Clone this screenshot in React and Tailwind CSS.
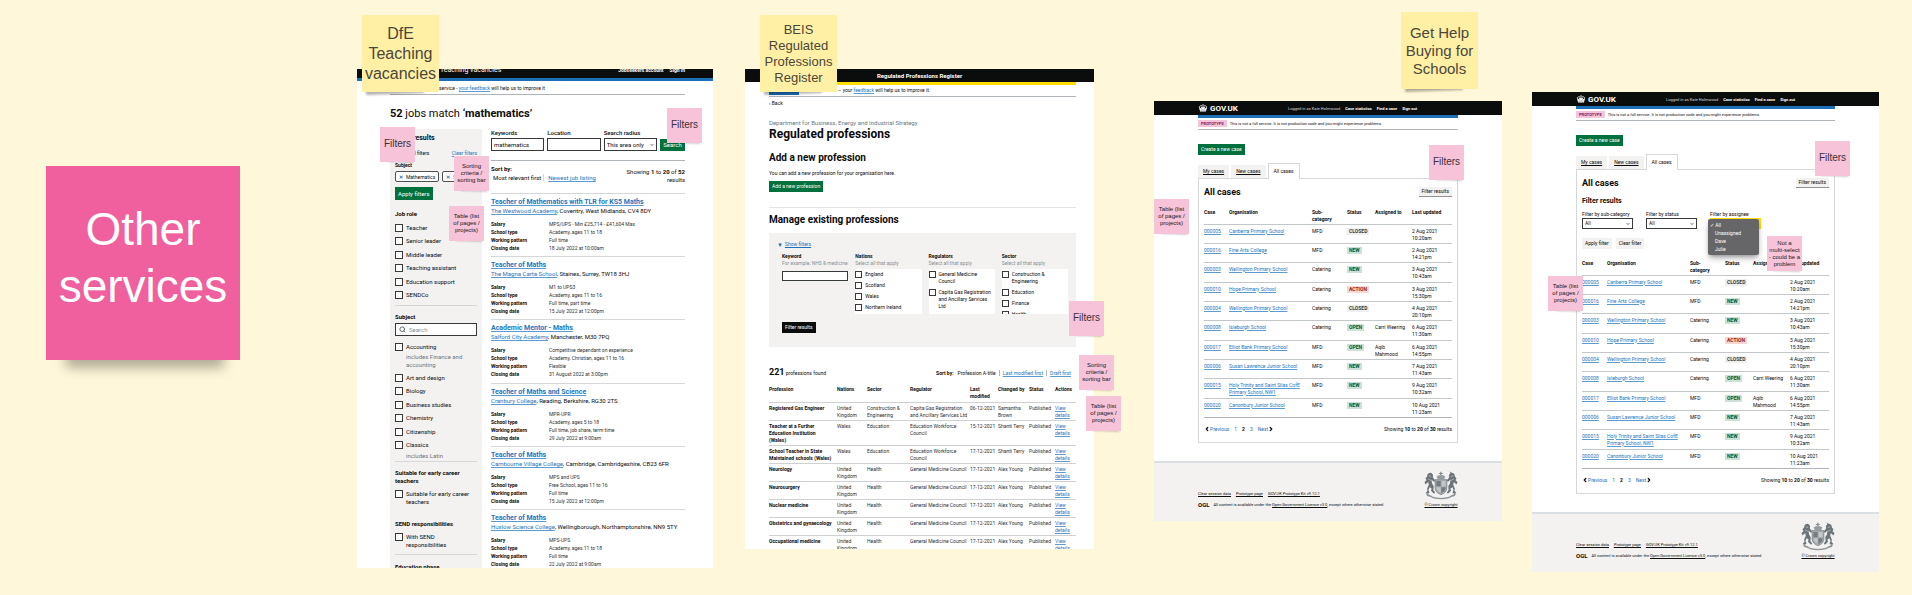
import React from "react";
import { Search, ChevronDown, ChevronLeft, ChevronRight } from "lucide-react";

const LINK = "text-[#2475bd] underline decoration-[#5b9bd0] underline-offset-1";

/* ---------- sticky notes ---------- */

function Sticky({ className, children, shadow = "left" }) {
  return (
    <div className={`absolute z-20 ${className}`}>
      <div
        className={
          shadow === "right"
            ? "absolute right-0.5 bottom-0 h-1.5 w-3/4 rotate-2 bg-black/30 blur-[1px]"
            : "absolute -bottom-0.5 left-1 h-2 w-3/4 -rotate-2 bg-black/30 blur-[1px]"
        }
      />
      <div className="relative flex h-full w-full items-center justify-center bg-inherit text-center">
        {children}
      </div>
    </div>
  );
}

function TitleNote({ className, lines }) {
  return (
    <Sticky className={`h-[77px] w-[77px] bg-[#fff0a6] text-[#4b473b] ${className}`}>
      <h2>
        {lines.map((l) => (
          <span key={l} className="block whitespace-nowrap">
            {l}
          </span>
        ))}
      </h2>
    </Sticky>
  );
}

function FilterNote({ className }) {
  return (
    <Sticky shadow="right" className={`h-[35px] w-[35px] bg-[#f6c3d9] text-[10px] leading-3 text-[#3d3138] ${className}`}>
      <span className="pb-0.5">Filters</span>
    </Sticky>
  );
}

function SmallNote({ className, lines }) {
  return (
    <Sticky shadow="right" className={`h-[35px] w-[35px] bg-[#f6c3d9] text-[6px] leading-[7px] text-[#20181c] ${className}`}>
      <p>
        {lines.map((l) => (
          <span key={l} className="block whitespace-nowrap">
            {l}
          </span>
        ))}
      </p>
    </Sticky>
  );
}

const SORTING = ["Sorting", "criteria /", "sorting bar"];
const TABLE = ["Table (list", "of pages /", "projects)"];

/* ---------- shared controls ---------- */

function TickBlock({ lines, tall }) {
  return (
    <label className="flex items-start gap-[3px]">
      <input
        type="checkbox"
        className={`shrink-0 appearance-none border border-[#383a3a] bg-white ${tall ? "size-2" : "size-[7px]"}`}
      />
      <span>
        {lines.map((l) => (
          <span key={l} className="block whitespace-nowrap">
            {l}
          </span>
        ))}
      </span>
    </label>
  );
}

function TickList({ items }) {
  return (
    <ul>
      {items.map((t) => (
        <li key={t} className="flex h-[13px] items-center even:h-[14px]">
          <TickBlock lines={[t]} tall />
        </li>
      ))}
    </ul>
  );
}

function Select({ label, option, className, focused }) {
  return (
    <label className="block min-w-0 whitespace-nowrap">
      {label}
      <span className={`grid items-center border bg-white font-normal ${focused ? "border-2 border-[#ffdd00]" : "border-[#383a3a]"} ${className}`}>
        <select className="col-start-1 row-start-1 h-full w-full appearance-none px-0.5 outline-none">
          <option>{option}</option>
        </select>
        <ChevronDown className="pointer-events-none col-start-1 row-start-1 mr-0.5 size-1 justify-self-end" strokeWidth={4} />
      </span>
    </label>
  );
}

/* ---------- Teaching vacancies ---------- */

const jobs = [
  ["Teacher of Mathematics with TLR for KS5 Maths", "The Westwood Academy", "Coventry, West Midlands, CV4 8DY", "MPS/UPS - Min £25,714 - £41,604 Max", "Academy, ages 11 to 18", "Full time", "18 July 2022 at 10:00am"],
  ["Teacher of Maths", "The Magna Carta School", "Staines, Surrey, TW18 3HJ", "M1 to UPS3", "Academy, ages 11 to 16", "Full time, part time", "15 July 2022 at 12:00pm"],
  ["Academic Mentor - Maths", "Salford City Academy", "Manchester, M30 7PQ", "Competitive dependant on experience", "Academy, Christian, ages 11 to 16", "Flexible", "31 August 2022 at 3:00pm"],
  ["Teacher of Maths and Science", "Cranbury College", "Reading, Berkshire, RG30 2TS", "MPR-UPR", "Academy, ages 5 to 18", "Full time, job share, term time", "29 July 2022 at 9:00am"],
  ["Teacher of Maths", "Cambourne Village College", "Cambridge, Cambridgeshire, CB23 6FR", "MPS and UPS", "Free School, ages 11 to 16", "Full time", "15 July 2022 at 12:00pm"],
  ["Teacher of Maths", "Huxlow Science College", "Wellingborough, Northamptonshire, NN9 5TY", "MPS-UPS", "Academy, ages 11 to 18", "Full time", "22 July 2022 at 9:00am"],
];

function Job({ job }) {
  const [title, school, place, ...facts] = job;
  const names = ["Salary", "School type", "Working pattern", "Closing date"];
  return (
    <li className="h-[63px] border-t border-[#d5d7d8] pt-1 nth-[3n]:h-16">
      <h4 className="text-[7px] leading-[9px] font-bold">
        <a href="#job" className={LINK}>{title}</a>
      </h4>
      <p className="text-[6px] leading-2 whitespace-nowrap">
        <a href="#school" className={LINK}>{school}</a>, {place}
      </p>
      <dl className="mt-[5px] grid grid-cols-[58px_1fr] text-[5px] leading-2">
        {names.map((n, i) => (
          <React.Fragment key={n}>
            <dt className="font-bold">{n}</dt>
            <dd className="whitespace-nowrap text-[#2f3132]">{facts[i]}</dd>
          </React.Fragment>
        ))}
      </dl>
    </li>
  );
}

function Tag({ children }) {
  return (
    <span className="flex h-[11px] shrink-0 items-center gap-[3px] rounded-xs border border-[#505354] bg-white px-[3px]">
      <span className="font-bold text-[#1d70b8]">✕</span>
      {children}
    </span>
  );
}

function Vacancies() {
  return (
    <section className="absolute top-[69px] left-[357px] h-[499px] w-[356px] overflow-hidden bg-white text-[6px] leading-2 text-[#0b0c0c]">
      <header className="flex h-3 justify-between overflow-hidden border-b-3 border-[#1d70b8] bg-[#0b0c0c] pr-7 pl-[83px] text-white">
        <span className="text-[7px] leading-[3px]">Teaching vacancies</span>
        <span className="flex gap-1.5 text-[5px] leading-[2px] font-bold">
          <a href="#jobseekers">Jobseekers account</a>
          <a href="#signin">Sign in</a>
        </span>
      </header>
      <div className="pr-7 pl-[33px]">
        <p className="h-3.5 border-b border-[#b1b4b6] pt-[3px] pl-[49px] text-[5px] whitespace-nowrap">
          service - <a href="#feedback" className={LINK}>your feedback</a> will help us to improve it
        </p>
        <h3 className="mt-[13px] text-[11px] leading-3">
          <b>52</b> jobs match <b>‘mathematics’</b>
        </h3>
        <div className="mt-[9px] grid grid-cols-[92px_1fr] gap-[9px]">
          <aside className="h-[440px] bg-[#f3f2f1] px-[5px] pt-[5px]">
            <h4 className="text-[7px] leading-2 font-bold">Filter results</h4>
            <div className="mt-[7px] flex justify-between text-[5px]">
              <span className="pl-1">Hide all filters</span>
              <a href="#clear" className={LINK}>Clear filters</a>
            </div>
            <h5 className="mt-1 text-[5px] leading-2 font-bold">Subject</h5>
            <div className="mt-0.5 flex gap-[3px] overflow-hidden text-[5px]">
              <Tag>Mathematics</Tag>
              <Tag>Statistics</Tag>
            </div>
            <button className="mt-[5px] block h-[13px] bg-[#00703c] px-[3px] text-white">Apply filters</button>
            <h5 className="mt-2.5 font-bold">Job role</h5>
            <div className="mt-[3px]">
              <TickList items={["Teacher", "Senior leader", "Middle leader", "Teaching assistant", "Education support", "SENDCo"]} />
            </div>
            <h5 className="mt-[3px] border-t border-[#d5d7d8] pt-[7px] font-bold">Subject</h5>
            <label className="mt-0.5 flex h-[13px] items-center gap-[3px] border border-[#383a3a] bg-white px-[3px]">
              <Search className="size-[7px] text-[#505a5f]" strokeWidth={3} />
              <input aria-label="Search subjects" placeholder="Search" className="w-12 placeholder:text-[#8a8f92]" />
            </label>
            <div className="mt-1">
              <TickList items={["Accounting"]} />
              <p className="pb-0.5 pl-[11px] text-[#6f777b]">includes Finance and<br />accounting</p>
              <TickList items={["Art and design", "Biology", "Business studies", "Chemistry", "Citizenship", "Classics"]} />
              <p className="pb-px pl-[11px] text-[#6f777b]">includes Latin</p>
            </div>
            <h5 className="border-t border-[#d5d7d8] pt-[7px] font-bold whitespace-nowrap">Suitable for early career<br />teachers</h5>
            <div className="mt-[5px]">
              <TickBlock tall lines={["Suitable for early career", "teachers"]} />
            </div>
            <h5 className="mt-3.5 font-bold">SEND responsibilities</h5>
            <div className="mt-[5px]">
              <TickBlock tall lines={["With SEND", "responsibilities"]} />
            </div>
            <h5 className="mt-[5px] border-t border-[#d5d7d8] pt-2 font-bold">Education phase</h5>
          </aside>
          <main>
            <form className="grid grid-cols-[1fr_1fr_1fr_25px] items-end gap-[3px] font-medium">
              <label className="min-w-0">
                Keywords
                <input defaultValue="mathematics" className="mt-px block h-[13px] w-full border border-[#383a3a] px-0.5 font-normal" />
              </label>
              <label className="min-w-0">
                Location
                <input className="mt-px block h-[13px] w-full border border-[#383a3a] px-0.5" />
              </label>
              <Select label="Search radius" option="This area only" className="mt-px h-[13px] w-full" />
              <button type="button" className="h-3 bg-[#00703c] font-normal text-white">Search</button>
            </form>
            <div className="mt-[9px] flex h-[33px] justify-between border-t border-[#b1b4b6] pt-1">
              <div>
                <p className="font-bold">Sort by:</p>
                <p className="mt-px whitespace-nowrap">
                  <span className="border-r border-[#d5d7d8] px-0.5">Most relevant first</span>
                  <a href="#newest" className={`ml-1 ${LINK}`}>Newest job listing</a>
                </p>
              </div>
              <p className="pt-[3px] text-right">
                Showing <b>1</b> to <b>20</b> of <b>52</b>
                <br />
                results
              </p>
            </div>
            <ul>
              {jobs.map((j, i) => (
                <Job key={i} job={j} />
              ))}
            </ul>
          </main>
        </div>
      </div>
    </section>
  );
}

/* ---------- Regulated professions ---------- */

const UK = ["United", "Kingdom"];
const GMC = ["General Medicine Council"];
const professions = [
  [["Registered Gas Engineer"], UK, ["Construction &", "Engineering"], ["Capita Gas Registration", "and Ancillary Services Ltd"], "06-12-2021", ["Samantha", "Brown"]],
  [["Teacher at a Further", "Education Institution", "(Wales)"], ["Wales"], ["Education"], ["Education Workforce", "Council"], "15-12-2021", ["Shanti Terry"]],
  [["School Teacher in State", "Maintained schools (Wales)"], ["Wales"], ["Education"], ["Education Workforce", "Council"], "17-12-2021", ["Shanti Terry"]],
  [["Neurology"], UK, ["Health"], GMC, "17-12-2021", ["Alex Young"]],
  [["Neurosurgery"], UK, ["Health"], GMC, "17-12-2021", ["Alex Young"]],
  [["Nuclear medicine"], UK, ["Health"], GMC, "17-12-2021", ["Alex Young"]],
  [["Obstetrics and gynaecology"], UK, ["Health"], GMC, "17-12-2021", ["Alex Young"]],
  [["Occupational medicine"], UK, ["Health"], GMC, "17-12-2021", ["Alex Young"]],
];

const facets = [
  ["Nations", "gap-1", [["England"], ["Scotland"], ["Wales"], ["Northern Ireland"]]],
  ["Regulators", "gap-1", [["General Medicine", "Council"], ["Capita Gas Registration", "and Ancillary Services", "Ltd"], ["Education Workforce"]]],
  ["Sector", "gap-1", [["Construction &", "Engineering"], ["Education"], ["Finance"], ["Health"]]],
];

function Lines({ of }) {
  return of.map((l) => (
    <span key={l} className="block whitespace-nowrap">
      {l}
    </span>
  ));
}

function Professions() {
  return (
    <section className="absolute top-[69px] left-[745px] h-[480px] w-[349px] overflow-hidden bg-white text-[5px] leading-[7px] text-[#0b0c0c]">
      <header className="h-[13px] bg-[#0b0c0c] text-center text-[6px] leading-[13px] font-bold text-white">Regulated Professions Register</header>
      <div className="pr-[18px] pl-6">
        <div className="flex h-[15px] items-center gap-[22px] border-t-3 border-b border-t-[#ffdd00] border-b-[#b1b4b6]">
          <strong className="h-2 w-[30px] bg-[#1d70b8] px-1 text-white">ALPHA</strong>
          <span className="whitespace-nowrap">
            service – your <a href="#feedback" className={LINK}>feedback</a> will help us to improve it.
          </span>
        </div>
        <a href="#back" className="mt-[3px] block">‹ Back</a>
        <p className="mt-3 text-[6px] leading-2 text-[#6f777b]">Department for Business, Energy and Industrial Strategy</p>
        <h3 className="text-[12px] leading-3.5 font-bold">Regulated professions</h3>
        <h4 className="mt-3 text-[10px] leading-2.5 font-bold">Add a new profession</h4>
        <p className="mt-[7px]">You can add a new profession for your organisation here.</p>
        <button className="mt-1 block h-[11px] bg-[#00703c] px-[3px] text-white">Add a new profession</button>
        <h4 className="mt-[15px] border-t border-[#e3e4e5] pt-[7px] text-[10px] leading-2.5 font-bold">Manage existing professions</h4>
        <div className="mt-2 bg-[#f3f2f1] px-2 pt-2 pb-3.5">
          <a href="#filters" className="flex items-center gap-0.5 text-[#1d70b8]">
            <span className="text-[6px]">▼</span>
            <span className="underline">Show filters</span>
          </a>
          <div className="mt-[5px] grid grid-cols-4 gap-[7px] pl-[5px]">
            <label>
              <b>Keyword</b>
              <span className="block whitespace-nowrap text-[#8a8f92]">For example, NHS &amp; medicine</span>
              <input className="mt-1 block h-2.5 w-full border border-[#383a3a] bg-white" />
            </label>
            {facets.map(([name, gap, items]) => (
              <fieldset key={name} className="min-w-0">
                <legend className="font-bold">{name}</legend>
                <p className="whitespace-nowrap text-[#8a8f92]">Select all that apply</p>
                <div className={`mt-0.5 flex h-[45px] flex-col overflow-hidden bg-white pt-0.5 ${gap}`}>
                  {items.map((it) => (
                    <TickBlock key={it[0]} lines={it} />
                  ))}
                </div>
              </fieldset>
            ))}
          </div>
          <button className="mt-2 ml-[5px] block h-[11px] bg-[#0b0c0c] px-[3px] text-white">Filter results</button>
        </div>
        <div className="mt-[19px] flex items-center justify-between leading-3">
          <p><b className="text-[9px]">221</b> professions found</p>
          <p className="pr-[5px] whitespace-nowrap">
            <b>Sort by:</b>
            <span className="ml-1 border-r border-[#b1b4b6] pr-[3px]">Profession A-title</span>
            <span className="border-r border-[#b1b4b6] px-[3px]"><a href="#last" className={LINK}>Last modified first</a></span>
            <a href="#draft" className={`ml-[3px] ${LINK}`}>Draft first</a>
          </p>
        </div>
        <table className="mt-[7px] w-full table-fixed border-collapse text-left">
          <colgroup>
            <col className="w-[68px]" />
            <col className="w-[30px]" />
            <col className="w-[43px]" />
            <col className="w-[60px]" />
            <col className="w-7" />
            <col className="w-[31px]" />
            <col className="w-[26px]" />
            <col />
          </colgroup>
          <thead>
            <tr className="h-4 align-top">
              {[["Profession"], ["Nations"], ["Sector"], ["Regulator"], ["Last", "modified"], ["Changed by"], ["Status"], ["Actions"]].map((h) => (
                <th key={h[0]} className="font-bold"><Lines of={h} /></th>
              ))}
            </tr>
          </thead>
          <tbody>
            {professions.map(([name, nation, sector, reg, date, by]) => (
              <tr key={name[0]} className="border-t border-[#cfd1d2] align-top text-[#2f3132]">
                <th className="pt-0.5 pb-px font-bold text-[#0b0c0c]"><Lines of={name} /></th>
                <td className="pt-0.5"><Lines of={nation} /></td>
                <td className="pt-0.5"><Lines of={sector} /></td>
                <td className="pt-0.5"><Lines of={reg} /></td>
                <td className="pt-0.5 whitespace-nowrap">{date}</td>
                <td className="pt-0.5"><Lines of={by} /></td>
                <td className="pt-0.5">Published</td>
                <td className="pt-0.5 pb-px"><a href="#details" className={LINK}>View<br />details</a></td>
              </tr>
            ))}
          </tbody>
        </table>
      </div>
    </section>
  );
}

/* ---------- GOV.UK cases ---------- */

function Crown() {
  return (
    <svg viewBox="0 0 36 32" className="h-2 w-[10px] fill-current" aria-hidden="true">
      <circle cx="18" cy="4" r="3" />
      <circle cx="10" cy="7" r="2.6" />
      <circle cx="26" cy="7" r="2.6" />
      <circle cx="4" cy="12" r="2.6" />
      <circle cx="32" cy="12" r="2.6" />
      <path d="M16.5 7h3l1 7 5-4 1 2-3 7 8-5 2 2-4 14H6.500L2.500 16l2-2 8 5-3-7 1-2 5 4z" />
      <path d="M8 25q10-3 20 0" fill="none" stroke="#0b0c0c" strokeWidth="1.500" />
    </svg>
  );
}

function Arms() {
  return (
    <svg viewBox="0 0 102 88" className="h-[29px] w-[34px]" aria-hidden="true">
      <g fill="#6b7478">
        <path d="M48.500 2h4v4h4v3h-4v5h-4V9h-4V6h4z" opacity=".8" />
        <path d="M38 16q13-8 26 0l-3 8H41z" fill="#959ca0" />
        <path d="M33 26h36v24q0 16-18 22-18-6-18-22z" fill="#a5abae" />
        <path d="M37 30h13v16H37zM52 49h13q0 12-13 18z" fill="#737c81" />
        <path d="M53 30h12v16H53zM38 49h12v16q-12-5-12-16z" fill="#c3c7c9" />
        <path d="M10 10q5-7 12-4l5 6-1 7 7 9-3 5-8-7 2 12 5 8-1 12 5 7-3 4-9-8 1-9-6-3-3 9 3 7-5 5-6-5 5-4-1-8 5-11-2-9-8 8-3-8 6-5-3-6 5-5z" />
        <path d="M92 10q-5-7-12-4l-5 6 1 7-7 9 3 5 8-7-2 12-5 8 1 12-5 7 3 4 9-8-1-9 6-3 3 9-3 7 5 5 6-5-5-4 1-8-5-11 2-9 8 8 3-8-6-5 3-6-5-5z" />
        <path d="M76 1l7 9 3-3z" />
        <path d="M4 66q6 5 12 6 14 9 35 9t35-9q6-1 12-6l-5 10q-12 3-18 7-24 6-48 0-6-4-18-7z" fill="#8d9599" />
      </g>
      <path d="M14 14l7 3M12 24l9 5M88 14l-7 3M90 24l-9 5M24 77q27 7 54 0" stroke="#f3f2f1" strokeWidth="1.500" fill="none" />
      <path d="M33 26h36v24q0 16-18 22-18-6-18-22z" fill="none" stroke="#5a6469" strokeWidth="1.500" />
    </svg>
  );
}

const cases = [
  ["000005", ["Canberra Primary School"], "MFD", "CLOSED", [], ["2 Aug 2021", "10:20am"]],
  ["000016", ["Fine Arts College"], "MFD", "NEW", [], ["2 Aug 2021", "14:21pm"]],
  ["000003", ["Wellington Primary School"], "Catering", "NEW", [], ["3 Aug 2021", "10:43am"]],
  ["000010", ["Hope Primary School"], "Catering", "ACTION", [], ["3 Aug 2021", "15:30pm"]],
  ["000004", ["Wellington Primary School"], "Catering", "CLOSED", [], ["4 Aug 2021", "20:10pm"]],
  ["000008", ["Isleburgh School"], "Catering", "OPEN", ["Carri Weering"], ["6 Aug 2021", "11:30am"]],
  ["000017", ["Elliot Bank Primary School"], "MFD", "OPEN", ["Aqib", "Mahmood"], ["6 Aug 2021", "14:55pm"]],
  ["000006", ["Susan Lawrence Junior School"], "MFD", "NEW", [], ["7 Aug 2021", "11:43am"]],
  ["000015", ["Holy Trinity and Saint Silas CofE", "Primary School, NW1"], "MFD", "NEW", [], ["9 Aug 2021", "10:32am"]],
  ["000020", ["Canonbury Junior School"], "MFD", "NEW", [], ["10 Aug 2021", "11:23am"]],
];

const tagStyle = {
  CLOSED: "bg-[#eeefef] text-[#383f43]",
  NEW: "bg-[#cce2d8] text-[#005a30]",
  OPEN: "bg-[#cce2d8] text-[#005a30]",
  ACTION: "bg-[#f6d7d2] text-[#942514]",
};

function CaseFilters() {
  return (
    <form className="mt-[9px]">
      <h4 className="text-[7px] leading-2 font-bold">Filter results</h4>
      <div className="mt-1.5 grid grid-cols-[51px_51px_51px] gap-[13px]">
        <Select label="Filter by sub-category" option="All" className="h-[11px] w-full" />
        <Select label="Filter by status" option="All" className="h-[11px] w-full" />
        <div className="relative">
          <Select label="Filter by assignee" option="All" className="h-[11px] w-full" focused />
          <ul className="absolute top-2 -left-0.5 z-10 w-[51px] rounded-xs bg-[#666668] py-[2px] pl-[7px] leading-2 text-white shadow-md shadow-black/30">
            <li className="-ml-[5px]">✓ All</li>
            <li>Unassigned</li>
            <li>Dave</li>
            <li>Julie</li>
          </ul>
        </div>
      </div>
      <div className="mt-[9px] flex gap-1">
        <button type="button" className="h-[11px] bg-[#f3f2f1] px-[3px] whitespace-nowrap">Apply filter</button>
        <button type="button" className="h-[11px] bg-[#f3f2f1] px-[3px] whitespace-nowrap">Clear filter</button>
      </div>
    </form>
  );
}

function Cases({ className, filters }) {
  const tab = "flex h-[13px] items-center bg-[#f3f2f1] px-[5px] whitespace-nowrap";
  return (
    <section className={`absolute bg-white text-[5px] leading-[7px] text-[#0b0c0c] ${className}`}>
      <header className="h-3.5 bg-[#0b0c0c] px-11 text-white">
        <div className="grid h-full grid-cols-[90px_1fr] items-center">
          <a href="#home" className="flex items-center gap-[2px] text-[8px] font-bold">
            <Crown />
            GOV.UK
          </a>
          <nav className="flex gap-[5px] text-[4px] whitespace-nowrap">
            <span className="text-[#d5d7d8]">Logged in as Kate Holmwood</span>
            <a href="#stats" className="font-bold">Case statistics</a>
            <a href="#find" className="font-bold">Find a case</a>
            <a href="#out" className="font-bold">Sign out</a>
          </nav>
        </div>
      </header>
      <div className="px-11">
        <div className="flex h-[15px] items-center gap-[3px] border-t-3 border-b border-t-[#1d70b8] border-b-[#b1b4b6] text-[4px] whitespace-nowrap">
          <strong className="bg-[#f6c3dd] px-[3px] text-[#80224d]">PROTOTYPE</strong>
          This is not a full service. It is not production code and you might experience problems.
        </div>
        <button className="mt-3.5 block h-[11px] bg-[#00703c] px-[3px] text-white">Create a new case</button>
        <div className="mt-2 flex items-end gap-0.5">
          <a href="#my" className={`underline ${tab}`}>My cases</a>
          <a href="#new" className={`underline ${tab}`}>New cases</a>
          <a href="#all" className="-mb-px flex h-4 items-center border border-b-0 border-[#d5d7d8] bg-white px-[5px]">All cases</a>
        </div>
        <div className="border border-[#d5d7d8] px-[5px] pt-2 pb-[9px]">
          <div className="flex h-2.5 items-center justify-between">
            <h3 className="text-[9px] font-bold">All cases</h3>
            <button className="h-2.5 border-b border-[#929191] bg-[#f3f2f1] px-[3px]">Filter results</button>
          </div>
          {filters && <CaseFilters />}
          <table className={`w-full table-fixed border-collapse text-left ${filters ? "mt-[11px]" : "mt-3"}`}>
            <colgroup>
              <col className="w-[25px]" />
              <col className="w-[83px]" />
              <col className="w-[35px]" />
              <col className="w-7" />
              <col className="w-[37px]" />
              <col />
            </colgroup>
            <thead>
              <tr className="h-[15px] align-top">
                {[["Case"], ["Organisation"], ["Sub-", "category"], ["Status"], ["Assigned to"], ["Last updated"]].map((h) => (
                  <th key={h[0]} className="font-bold"><Lines of={h} /></th>
                ))}
              </tr>
            </thead>
            <tbody className="border-b border-[#b1b4b6]">
              {cases.map(([id, org, sub, status, who, when]) => (
                <tr key={id} className="h-[19px] border-t border-[#c4c7c8] align-top nth-[3n]:h-5">
                  <td className="pt-[3px]"><a href="#case" className={LINK}>{id}</a></td>
                  <td className="pt-[3px]"><a href="#case" className={LINK}><Lines of={org} /></a></td>
                  <td className="pt-[3px]">{sub}</td>
                  <td className="pt-[3px]"><strong className={`inline-block px-0.5 ${tagStyle[status]}`}>{status}</strong></td>
                  <td className="pt-[3px]"><Lines of={who} /></td>
                  <td className="pt-[3px]"><Lines of={when} /></td>
                </tr>
              ))}
            </tbody>
          </table>
          <div className="mt-2 flex justify-between">
            <nav className="flex gap-[5px] text-[#1d70b8]">
              <a href="#prev" className="flex items-center">
                <ChevronLeft className="size-[6px] text-[#0b0c0c]" strokeWidth={5} />
                Previous
              </a>
              <a href="#1">1</a>
              <b className="text-[#0b0c0c]">2</b>
              <a href="#3">3</a>
              <a href="#next" className="flex items-center">
                Next
                <ChevronRight className="size-[6px] text-[#0b0c0c]" strokeWidth={5} />
              </a>
            </nav>
            <p>Showing <b>10</b> to <b>20</b> of <b>30</b> results</p>
          </div>
        </div>
      </div>
      <footer className="mt-[18px] flex items-end justify-between border-t-2 border-[#dcdfe2] bg-[#f3f2f1] px-11 pt-2 pb-[13px] text-[4px] whitespace-nowrap">
        <div>
          <p className="flex gap-[5px] underline">
            <a href="#data">Clear session data</a>
            <a href="#proto">Prototype page</a>
            <a href="#kit">GOV.UK Prototype Kit v9.12.1</a>
          </p>
          <p className="mt-1 flex gap-1">
            <b className="text-[6px]">OGL</b>
            <span>All content is available under the <a href="#ogl" className="underline">Open Government Licence v3.0</a>, except where otherwise stated</span>
          </p>
        </div>
        <div className="flex flex-col items-center">
          <Arms />
          <a href="#crown" className="mt-[1px] underline">© Crown copyright</a>
        </div>
      </footer>
    </section>
  );
}

export default function App() {
  return (
    <div className="relative min-h-screen overflow-hidden bg-[#fff7d9] font-['Liberation_Sans',Arial,sans-serif]">
      <div className="absolute top-[166px] left-[46px] size-[194px]">
        <div className="absolute -bottom-2 left-5 h-10 w-[158px] bg-black/30 blur-[6px]" />
        <h1 className="relative flex size-full items-center justify-center bg-[#f05f9e] pb-2.5 text-center text-[46px] leading-[57px] text-white">
          <span>Other<br />services</span>
        </h1>
      </div>

      <div className="font-[Roboto,'Liberation_Sans',sans-serif]">
        <Vacancies />
        <Professions />
        <Cases className="top-[101px] left-[1154px] w-[348px]" />
        <Cases className="top-[92px] left-[1532px] w-[347px]" filters />
      </div>

      <TitleNote className="top-[15px] left-[362px] pb-0 text-[16px] leading-5" lines={["DfE", "Teaching", "vacancies"]} />
      <TitleNote className="top-[15px] left-[760px] pb-0 text-[13px] leading-4" lines={["BEIS", "Regulated", "Professions", "Register"]} />
      <TitleNote className="top-[12px] left-[1401px] pb-0 text-[15px] leading-[18px]" lines={["Get Help", "Buying for", "Schools"]} />

      <FilterNote className="top-[127px] left-[380px]" />
      <FilterNote className="top-[108px] left-[667px]" />
      <FilterNote className="top-[301px] left-[1069px]" />
      <FilterNote className="top-[145px] left-[1429px]" />
      <FilterNote className="top-[141px] left-[1815px]" />

      <SmallNote className="top-[156px] left-[454px]" lines={SORTING} />
      <SmallNote className="top-[206px] left-[449px]" lines={TABLE} />
      <SmallNote className="top-[355px] left-[1079px]" lines={SORTING} />
      <SmallNote className="top-[396px] left-[1086px]" lines={TABLE} />
      <SmallNote className="top-[199px] left-[1154px]" lines={TABLE} />
      <SmallNote className="top-[276px] left-[1548px]" lines={TABLE} />
      <SmallNote className="top-[236px] left-[1767px]" lines={["Not a", "multi-select", "- could be a", "problem"]} />
    </div>
  );
}
